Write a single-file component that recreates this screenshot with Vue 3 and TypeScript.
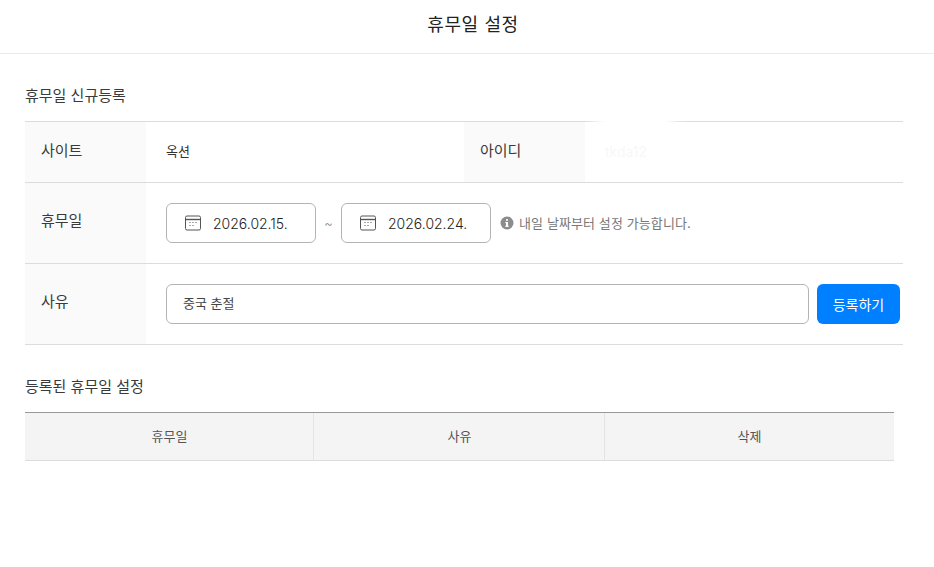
<script setup lang="ts">
// Holiday settings form
import { ref } from 'vue'

const startDate = ref('2026.02.15.')
const endDate = ref('2026.02.24.')
const reason = ref('중국 춘절')
const columns = ['휴무일', '사유', '삭제']
</script>

<template>
  <div class="page">
    <header class="top-bar">
      <h1 class="top-title">휴무일 설정</h1>
    </header>

    <main class="content">
      <h2 class="section-title first">휴무일 신규등록</h2>

      <section class="form-table">
        <div class="form-row site-row">
          <div class="label">사이트</div>
          <div class="value site-value">옥션</div>
          <div class="label">아이디</div>
          <div class="value id-value">tkda12</div>
          <span class="mask" aria-hidden="true"></span>
        </div>

        <div class="form-row date-row">
          <div class="label">휴무일</div>
          <div class="value field-line">
            <div class="date-box">
              <svg class="cal" viewBox="0 0 16 16" fill="none" stroke="#555" stroke-width="1">
                <rect x="0.5" y="1" width="15" height="14" rx="1.5" />
                <path d="M.5 4.5h15" stroke-width="1.4" />
                <path d="M4.5 7.5h1M7.5 7.5h1M10.5 7.5h1M4.5 10.5h1M7.5 10.5h1" />
              </svg>
              <span>{{ startDate }}</span>
            </div>
            <span class="tilde">~</span>
            <div class="date-box">
              <svg class="cal" viewBox="0 0 16 16" fill="none" stroke="#555" stroke-width="1">
                <rect x="0.5" y="1" width="15" height="14" rx="1.5" />
                <path d="M.5 4.5h15" stroke-width="1.4" />
                <path d="M4.5 7.5h1M7.5 7.5h1M10.5 7.5h1M4.5 10.5h1M7.5 10.5h1" />
              </svg>
              <span>{{ endDate }}</span>
            </div>
            <p class="hint">
              <svg class="info" viewBox="0 0 14 14">
                <circle cx="7" cy="7" r="6.5" fill="#8c8c8c" />
                <rect x="6" y="6" width="2" height="4.6" fill="#fff" />
                <rect x="5.2" y="6" width="1.6" height="1" fill="#fff" />
                <rect x="5.2" y="9.8" width="3.6" height="1" fill="#fff" />
                <circle cx="7" cy="4" r="1.1" fill="#fff" />
              </svg>
              <span class="hint-text">내일 날짜부터 설정 가능합니다.</span>
            </p>
          </div>
        </div>

        <div class="form-row reason-row">
          <div class="label">사유</div>
          <div class="value field-line">
            <div class="reason-input">{{ reason }}</div>
            <button class="submit-btn" type="button">등록하기</button>
          </div>
        </div>
      </section>

      <h2 class="section-title second">등록된 휴무일 설정</h2>

      <section class="list-table">
        <div v-for="col in columns" :key="col" class="list-head">{{ col }}</div>
      </section>
    </main>
  </div>
</template>

<style scoped>
.page {
  width: 934px;
  height: 567px;
  overflow: hidden;
  background: #fff;
  font-family: Inter, "Noto Sans CJK KR", sans-serif;
  color: #222;
}

.top-bar {
  height: 46px;
  display: flex;
  align-items: center;
  justify-content: center;
  padding: 0 0 7px 12px;
  border-bottom: 1px solid #eaeaea;
}

.top-title {
  margin: 0;
  font-size: 18px;
  letter-spacing: 0.6px;
  font-weight: 400;
  color: #222;
}

.content {
  padding: 0 31px 0 25px;
}

.section-title {
  margin: 0;
  font-size: 15px;
  line-height: 22px;
  font-weight: 400;
  color: #3a3a3a;
}

.section-title.first {
  padding-top: 31px;
  padding-bottom: 14px;
}

.section-title.second {
  padding-top: 31px;
  padding-bottom: 14px;
}

.form-table {
  border-top: 1px solid #dcdcdc;
}

.form-row {
  position: relative;
  display: grid;
  border-bottom: 1px solid #dcdcdc;
}

.site-row {
  grid-template-columns: 121px 318px 121px 1fr;
  height: 60px;
}

.date-row,
.reason-row {
  grid-template-columns: 121px 1fr;
  height: 80px;
}

.label {
  background: #fafafa;
  padding: 18px 0 0 16px;
  font-size: 15px;
  line-height: 22px;
  color: #3a3a3a;
}

.date-row .label,
.reason-row .label {
  padding-top: 27px;
}

.value {
  padding-left: 20px;
  font-size: 13px;
  color: #333;
}

.site-value {
  padding-top: 20px;
  line-height: 18px;
}

.id-value {
  padding-top: 21px;
  line-height: 18px;
  font-size: 14px;
  color: #f8f8f8;
}

.mask {
  position: absolute;
  left: 560px;
  top: -2px;
  width: 100px;
  height: 6px;
  background: linear-gradient(90deg, transparent, #fff 20%, #fff 80%, transparent);
}

.field-line {
  display: flex;
  align-items: center;
}

.date-box {
  box-sizing: border-box;
  width: 150px;
  height: 40px;
  display: flex;
  align-items: center;
  gap: 12px;
  padding-left: 18px;
  border: 1px solid #b4b4b4;
  border-radius: 6px;
  font-size: 14px;
  font-weight: 300;
  color: #222;
}

.cal {
  width: 16px;
  height: 16px;
}

.tilde {
  width: 25px;
  text-align: center;
  font-size: 13px;
  font-weight: 300;
  color: #888;
}

.hint {
  margin: 0 0 0 9px;
  display: flex;
  align-items: center;
  gap: 5px;
  font-size: 13px;
  color: #777;
}

.hint-text {
  padding-bottom: 2px;
  letter-spacing: 0.1px;
}

.info {
  width: 14px;
  height: 14px;
}

.reason-input {
  box-sizing: border-box;
  width: 643px;
  height: 40px;
  display: flex;
  align-items: center;
  padding: 0 0 3px 16px;
  border: 1px solid #b4b4b4;
  border-radius: 6px;
  font-size: 13px;
  color: #444;
}

.submit-btn {
  width: 83px;
  height: 40px;
  margin-left: 8px;
  border: none;
  border-radius: 6px;
  background: #007fff;
  color: #fff;
  font-family: inherit;
  font-size: 14px;
}

.list-table {
  width: 869px;
  display: grid;
  grid-template-columns: 289px 291px 289px;
  border-top: 1px solid #999;
  border-bottom: 1px solid #dcdcdc;
  background: #f4f4f4;
}

.list-head {
  box-sizing: border-box;
  height: 47px;
  display: flex;
  align-items: center;
  justify-content: center;
  padding: 0 0 2px 1px;
  font-size: 13px;
  color: #555;
  border-right: 1px solid #e4e4e4;
}

.list-head:last-child {
  border-right: none;
  padding-left: 0;
}
</style>
